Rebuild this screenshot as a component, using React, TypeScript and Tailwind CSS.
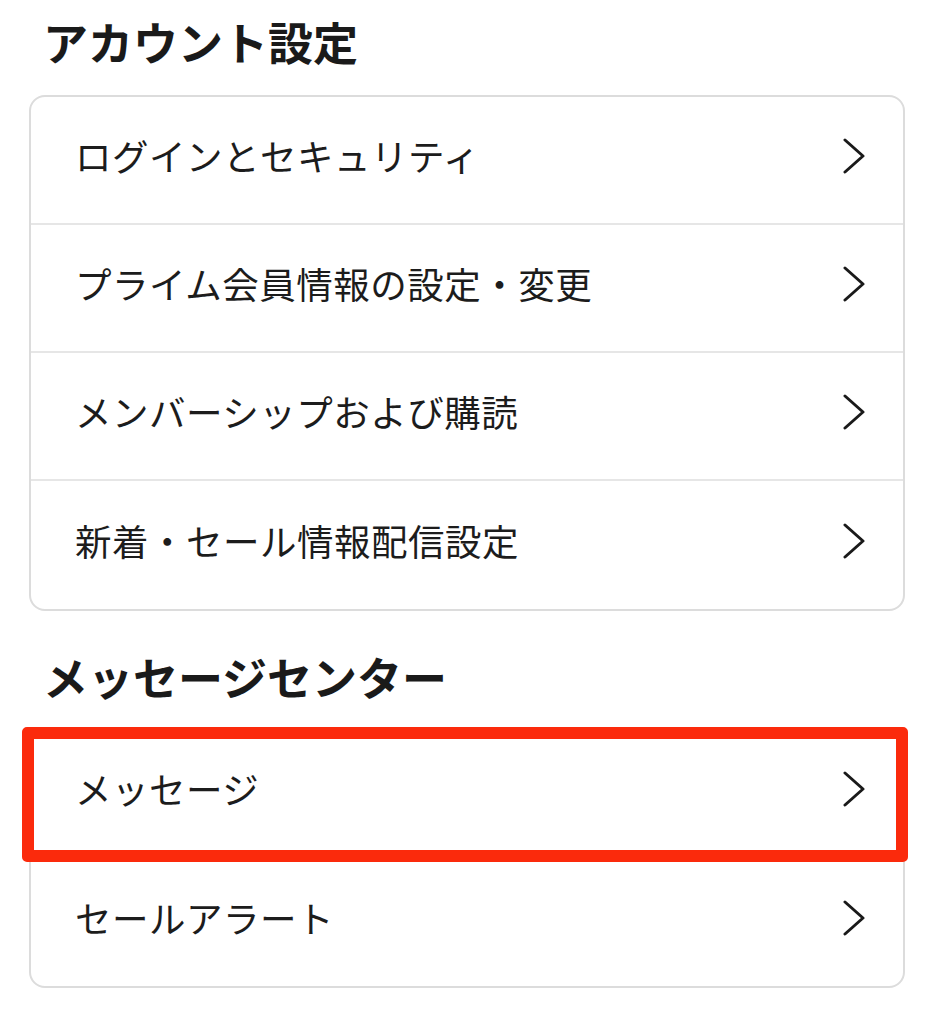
import React from 'react';

const font = { fontFamily: '"Noto Sans CJK JP", "Noto Sans", sans-serif' };

function Chevron() {
  return (
    <svg width="24" height="36" viewBox="0 0 24 36" fill="none" className="shrink-0">
      <polyline points="3,2 21,18 3,34" stroke="#1a1a1a" strokeWidth="3" strokeLinecap="round" strokeLinejoin="round" />
    </svg>
  );
}

function Row({ label, last }: { label: string; last?: boolean }) {
  return (
    <div className={`flex h-[128px] items-center justify-between pb-[8px] pl-[44px] pr-[37px] ${last ? '' : 'border-b-2 border-[#e6e6e6]'}`}>
      <span className="text-[36.5px] leading-none tracking-[0.5px] text-[#1c1c1c]">{label}</span>
      <Chevron />
    </div>
  );
}

export default function App() {
  const account = ['ログインとセキュリティ', 'プライム会員情報の設定・変更', 'メンバーシップおよび購読', '新着・セール情報配信設定'];
  const messages = ['メッセージ', 'セールアラート'];

  return (
    <div className="min-h-[1024px] w-[932px] bg-white pt-[18px]" style={font}>
      <h2 className="pl-[43px] text-[45px] font-bold leading-[47px] text-[#1a1a1a]">アカウント設定</h2>
      <div className="mx-[29px] mt-[30px] w-[876px] overflow-hidden rounded-[16px] border-2 border-[#dcdcdc] bg-white">
        {account.map((l, i) => (
          <Row key={l} label={l} last={i === account.length - 1} />
        ))}
      </div>

      <h2 className="mt-[42px] pl-[43px] text-[45px] font-bold leading-[47px] text-[#1a1a1a]">メッセージセンター</h2>
      <div className="relative mx-[29px] mt-[28px] w-[876px]">
        <div className="overflow-hidden rounded-[16px] border-2 border-[#dcdcdc] bg-white">
          {messages.map((l, i) => (
            <Row key={l} label={l} last={i === messages.length - 1} />
          ))}
        </div>
        <div className="pointer-events-none absolute left-[-7px] top-[-1px] h-[135px] w-[886px] rounded-[5px] border-[12px] border-[#fb2a0c]" />
      </div>
    </div>
  );
}
